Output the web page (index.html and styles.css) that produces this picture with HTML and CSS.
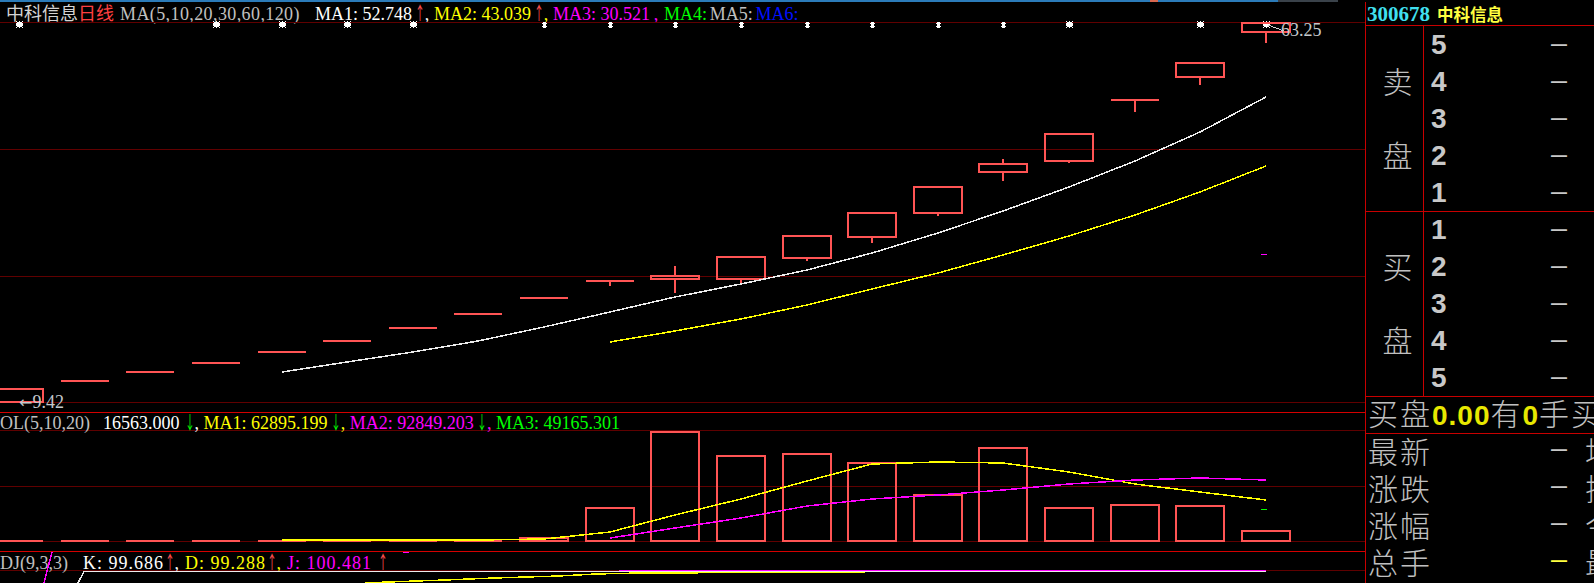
FILE: index.html
```html
<!DOCTYPE html>
<html lang="zh-CN">
<head>
<meta charset="utf-8">
<title>中科信息 日线</title>
<link rel="stylesheet" href="styles.css">
</head>
<body>
<div class="screen">
  <div class="topstrip"><span class="ts-seg ts-blue"></span><span class="ts-seg ts-tab"></span><span class="ts-seg ts-blue2"></span><span class="ts-seg ts-gray"></span></div>
  <div class="main">
    <section class="charts">
      <div class="hdr title">
        <span class="c-name">中科信息</span><span class="c-red">日线</span><span class="c-gray t-par">MA(5,10,20,30,60,120)</span><span class="c-white v11">MA1: 52.748</span><span class="arr up">↑</span><span class="cm c-white">,</span><span class="c-yel v11">MA2: 43.039</span><span class="arr up">↑</span><span class="cm c-yel">,</span><span class="c-mag v11">MA3: 30.521</span><span class="cm2 c-mag">,</span><span class="c-grn v4">MA4:</span><span class="c-gray v4">MA5:</span><span class="c-blu">MA6:</span>
      </div>
      <svg class="pane price" width="1365" height="390" viewBox="0 22 1365 390">
        <defs>
          <g id="st"><rect x="-2" y="22" width="5" height="5"/><rect x="-3" y="23" width="7" height="3"/><rect x="-3" y="21" width="1" height="1"/><rect x="0" y="21" width="1" height="1"/><rect x="3" y="21" width="1" height="1"/><rect x="-3" y="27" width="1" height="1"/><rect x="0" y="27" width="1" height="1"/><rect x="3" y="27" width="1" height="1"/></g>
          <g id="sn"><rect x="-1" y="22" width="3" height="6"/><rect x="-2" y="23" width="5" height="1"/><rect x="-2" y="26" width="5" height="1"/></g>
        </defs>
        <path class="grid" d="M0 22.5H1365M0 149.5H1365M0 276.5H1365M0 402.5H1365"/>
        <g class="stars">
          <use href="#st" x="19"/><use href="#st" x="216"/><use href="#st" x="282"/><use href="#st" x="347"/><use href="#st" x="413"/>
          <use href="#sn" x="544"/><use href="#sn" x="610"/><use href="#sn" x="675"/><use href="#sn" x="741"/><use href="#sn" x="807"/><use href="#sn" x="872"/><use href="#sn" x="938"/><use href="#sn" x="1003"/>
          <use href="#st" x="1069"/><use href="#st" x="1200"/><use href="#st" x="1266"/>
        </g>
        <g class="cdl">
          <rect x="-5" y="389" width="48" height="13"/>
          <path d="M61 381H109M126 372H174M192 363H240M258 352H306M323 341H371M389 328H437M454 314H502M520 298H568M586 281H634M1111 100H1159"/>
          <rect x="651" y="276" width="48" height="3"/>
          <rect x="717" y="257" width="48" height="22"/>
          <rect x="783" y="236" width="48" height="22"/>
          <rect x="848" y="213" width="48" height="24"/>
          <rect x="914" y="187" width="48" height="26"/>
          <rect x="979" y="164" width="48" height="8"/>
          <rect x="1045" y="134" width="48" height="27"/>
          <rect x="1176" y="63" width="48" height="14"/>
          <rect x="1242" y="23" width="48" height="9"/>
        </g>
        <path class="wick" d="M610 281V286M675 266V275M675 280V293M741 280V283M807 259V261M872 238V243M938 214V216M1003 159V163M1003 173V181M1069 162V163M1135 100V112M1200 78V85M1266 33V43"/>
        <polyline class="ma-w" points="282,372 347,362 413,352 478,341 544,327 610,312 675,297 741,284 807,270 872,253 938,233 1003,211 1069,187 1135,161 1200,132 1266,97"/>
        <polyline class="ma-y" points="610,342 675,331 741,319 807,305 872,289 938,273 1003,255 1069,236 1135,215 1200,192 1266,166"/>
        <path class="ma-m" d="M1261 254.5H1267"/>
        <path class="pointer" d="M1268 25L1284 31"/>
        <text class="plabel" x="1281" y="36">63.25</text>
        <text class="plabel" x="19" y="408"><tspan class="larr">←</tspan>9.42</text>
      </svg>
      <div class="hdr sub vol-hdr">
        <span class="c-gray vl">VOL(5,10,20)</span><span class="c-white v9">16563.000</span><span class="arr dn">↓</span><span class="cm1 c-white">,</span><span class="c-yel v14">MA1: 62895.199</span><span class="arr dn">↓</span><span class="cm1 c-yel">,</span><span class="c-mag v14">MA2: 92849.203</span><span class="arr dn">↓</span><span class="cm1 c-mag">,</span><span class="c-grn">MA3: 49165.301</span>
      </div>
      <svg class="pane vol" width="1365" height="120" viewBox="0 431 1365 120">
        <path class="grid" d="M0 486.5H1365M0 541.5H1365"/>
        <g class="cdl">
          <path d="M-5 541H43M61 541H109M126 541H174M192 541H240M258 541H306M323 541H371M389 541H437M454 541H502"/>
          <rect x="520" y="538" width="48" height="3"/>
          <rect x="586" y="508" width="48" height="33"/>
          <rect x="651" y="432" width="48" height="109"/>
          <rect x="717" y="456" width="48" height="85"/>
          <rect x="783" y="454" width="48" height="87"/>
          <rect x="848" y="463" width="48" height="78"/>
          <rect x="914" y="495" width="48" height="46"/>
          <rect x="979" y="448" width="48" height="93"/>
          <rect x="1045" y="508" width="48" height="33"/>
          <rect x="1111" y="505" width="48" height="36"/>
          <rect x="1176" y="506" width="48" height="35"/>
          <rect x="1242" y="531" width="48" height="10"/>
        </g>
        <polyline class="ma-y" points="282,540 347,540 413,540 478,540 544,539 610,532 675,515 741,499 807,481 872,464 938,462 1003,463 1069,472 1135,484 1200,492 1266,500"/>
        <polyline class="ma-m" points="610,538 675,528 741,518 807,506 872,499 938,495 1003,490 1069,484 1135,480 1200,478 1266,480"/>
        <path class="ma-g" d="M1261 509.5H1267"/>
      </svg>
      <div class="hdr sub kdj-hdr">
        <span class="c-gray kl">KDJ(9,3,3)</span><span class="c-white k9 ls1">K: 99.686</span><span class="arr up">↑</span><span class="cmk c-white">,</span><span class="c-yel k9 ls1">D: 99.288</span><span class="arr up">↑</span><span class="cmk c-yel">,</span><span class="c-mag k10 ls1">J: 100.481</span><span class="arr up">↑</span>
      </div>
      <svg class="pane kdj" width="1365" height="12" viewBox="0 571 1365 12">
        <polyline class="ma-y" points="365,583 388,582 445,580 494,578 559,576 596,574 640,573 760,572.5 900,571.5 1266,571.5"/>
        <polyline class="ma-m" points="44,583 52,552"/>
        <path class="ma-m" d="M403 552.5H409"/>
        <polyline class="ma-w" points="78,583 84,571.5 1266,571.5"/>
        <polyline class="ma-m thin" points="619,570.5 1266,570.5"/>
      </svg>
    </section>
    <aside class="quote">
      <div class="q-head"><span class="q-code">300678</span><span class="q-name">中科信息</span></div>
      <div class="book sell">
        <div class="book-label"><span>卖</span><span>盘</span></div>
        <div class="book-rows">
          <div class="lv"><span class="lv-n">5</span><span class="dash">—</span></div>
          <div class="lv"><span class="lv-n">4</span><span class="dash">—</span></div>
          <div class="lv"><span class="lv-n">3</span><span class="dash">—</span></div>
          <div class="lv"><span class="lv-n">2</span><span class="dash">—</span></div>
          <div class="lv"><span class="lv-n">1</span><span class="dash">—</span></div>
        </div>
      </div>
      <div class="book buy">
        <div class="book-label"><span>买</span><span>盘</span></div>
        <div class="book-rows">
          <div class="lv"><span class="lv-n">1</span><span class="dash">—</span></div>
          <div class="lv"><span class="lv-n">2</span><span class="dash">—</span></div>
          <div class="lv"><span class="lv-n">3</span><span class="dash">—</span></div>
          <div class="lv"><span class="lv-n">4</span><span class="dash">—</span></div>
          <div class="lv"><span class="lv-n">5</span><span class="dash">—</span></div>
        </div>
      </div>
      <div class="q-sum"><span>买盘</span><span class="q-num">0.00</span><span>有</span><span class="q-num">0</span><span>手买</span></div>
      <div class="q-row"><span class="q-lbl">最新</span><span class="dash">—</span><span class="q-lbl2">均价</span></div>
      <div class="q-row"><span class="q-lbl">涨跌</span><span class="dash">—</span><span class="q-lbl2">振幅</span></div>
      <div class="q-row"><span class="q-lbl">涨幅</span><span class="dash">—</span><span class="q-lbl2">今开</span></div>
      <div class="q-row"><span class="q-lbl">总手</span><span class="dash dash-y">—</span><span class="q-lbl2">最高</span></div>
    </aside>
  </div>
</div>
</body>
</html>
```

FILE: styles.css
```css
* { box-sizing: border-box; margin: 0; padding: 0; }
html, body { background: #000; }
body {
  width: 1594px;
  height: 583px;
  overflow: hidden;
  font-family: "Liberation Serif", "Noto Sans CJK SC", serif;
  color: #c0c0c0;
}
.screen { width: 1594px; height: 583px; display: flex; flex-direction: column; }

.topstrip { height: 2px; flex: none; display: flex; }
.ts-seg { display: block; height: 2px; }
.ts-blue { width: 1150px; background: #2b7bb9; }
.ts-tab { width: 8px; background: #d86850; }
.ts-blue2 { width: 120px; background: #2b7bb9; }
.ts-gray { width: 60px; background: #3a424a; }

.main { height: 581px; display: flex; }

.charts {
  width: 1365px;
  flex: none;
  display: flex;
  flex-direction: column;
  overflow: hidden;
}
.hdr {
  display: flex;
  align-items: baseline;
  font-size: 18px;
  flex: none;
  overflow: visible;
}
.hdr > span { flex: none; white-space: pre; }
.title { height: 20px; line-height: 20px; padding-left: 6px; }
.sub { border-top: 1px solid #d40000; border-bottom: 1px solid #5e0000; }
.vol-hdr { height: 19px; line-height: 17px; }
.kdj-hdr { height: 20px; line-height: 18px; }

.c-name { color: #d4d4d4; }
.c-gray { color: #c0c0c0; }
.c-white { color: #ffffff; }
.c-red { color: #ff4040; }
.c-yel { color: #ffff00; }
.c-mag { color: #ff00ff; }
.c-grn { color: #00ff00; }
.c-blu { color: #0010ff; }

/* segment widths follow the 9.15px character grid of the original */
.t-par { width: 195px; margin-left: 6px; letter-spacing: 0.4px; }
.v11 { width: 100.7px; }
.v4 { width: 45.75px; }
.v9 { width: 82.4px; }
.v14 { width: 128.2px; }
.vl { width: 116px; margin-left: -13px; }
.kl { width: 96px; margin-left: -13px; }
.k9 { width: 82.5px; }
.k10 { width: 91.6px; }
.cm { width: 9.3px; }
.cm1 { width: 9.1px; }
.cm2 { width: 10.3px; }
.cmk { width: 10.5px; }
.ls1 { letter-spacing: 1px; }

.arr {
  width: 18px;
  margin: 0 -4.5px;
  text-align: center;
  font-family: "Noto Sans CJK SC", sans-serif;
  transform: scaleX(0.55);
}
.up { color: #ff5050; }
.dn { color: #00ff00; }

.pane { display: block; flex: none; overflow: visible; shape-rendering: crispEdges; }
.grid { stroke: #600000; stroke-width: 1; fill: none; }
.stars { fill: #ffffff; }
.cdl { stroke: #ff5454; stroke-width: 2; fill: none; }
.wick { stroke: #ff5454; stroke-width: 1.5; fill: none; }
.ma-w { stroke: #ececec; stroke-width: 1.5; fill: none; }
.ma-y { stroke: #ffff00; stroke-width: 1.5; fill: none; }
.ma-m { stroke: #ff00ff; stroke-width: 1.5; fill: none; }
.ma-m.thin { stroke-width: 1; }
.ma-g { stroke: #00ff00; stroke-width: 1.5; fill: none; }
.pointer { stroke: #d0d0d0; stroke-width: 1; fill: none; }
.plabel { fill: #c4c8cc; font-family: "Liberation Serif", serif; font-size: 18px; }
.larr { font-family: "DejaVu Sans", sans-serif; font-size: 16px; }

.quote {
  width: 229px;
  flex: none;
  border-left: 1px solid #c80000;
  display: flex;
  flex-direction: column;
  overflow: hidden;
  color: #c0c0c0;
  font-family: "Noto Sans CJK SC", sans-serif;
}
.q-head {
  height: 24px;
  flex: none;
  border-bottom: 1px solid #c80000;
  line-height: 23px;
  padding: 1px 0 0 1px;
  white-space: nowrap;
}
.q-code { font-family: "Liberation Serif", serif; font-weight: bold; font-size: 21px; color: #40e0f0; }
.q-name { font-family: "Noto Sans CJK SC", sans-serif; font-weight: bold; font-size: 16.5px; color: #ffff40; margin-left: 7px; }

.book { flex: none; display: flex; border-bottom: 1px solid #c80000; }
.sell { height: 186px; }
.buy { height: 185px; }
.book-label {
  width: 58px;
  flex: none;
  border-right: 1px solid #c80000;
  display: flex;
  flex-direction: column;
  align-items: center;
  justify-content: center;
  gap: 44px;
  padding: 0 0 4px 6px;
  font-size: 30px;
  font-weight: 300;
  line-height: 30px;
}
.book-rows { flex: 1; display: grid; grid-template-rows: repeat(5, 1fr); }
.lv { display: flex; align-items: center; padding-left: 7px; }
.lv-n {
  width: 120px;
  flex: none;
  font-family: "Liberation Sans", sans-serif;
  font-weight: bold;
  font-size: 28px;
  line-height: 28px;
  color: #c8c8c8;
}
.dash {
  width: 16px;
  flex: none;
  font-family: "Liberation Sans", sans-serif;
  font-weight: bold;
  font-size: 16px;
  line-height: 16px;
  color: #c8c8c8;
}
.dash-y { color: #ffff40; }

.q-sum {
  height: 37px;
  flex: none;
  border-bottom: 1px solid #c80000;
  padding-left: 2px;
  font-size: 30px;
  font-weight: 300;
  line-height: 30px;
  letter-spacing: 2px;
  white-space: nowrap;
}
.q-num {
  font-family: "Liberation Sans", sans-serif;
  font-weight: bold;
  font-size: 28px;
  letter-spacing: 1px;
  color: #e8e800;
}
.q-row {
  height: 37px;
  flex: none;
  display: flex;
  align-items: center;
  padding: 0 0 6px 2px;
  white-space: nowrap;
}
.q-lbl, .q-lbl2 {
  flex: none;
  font-size: 30px;
  font-weight: 300;
  line-height: 30px;
  letter-spacing: 2px;
}
.q-lbl { width: 183px; }
.q-lbl2 { margin-left: 18px; }
```
